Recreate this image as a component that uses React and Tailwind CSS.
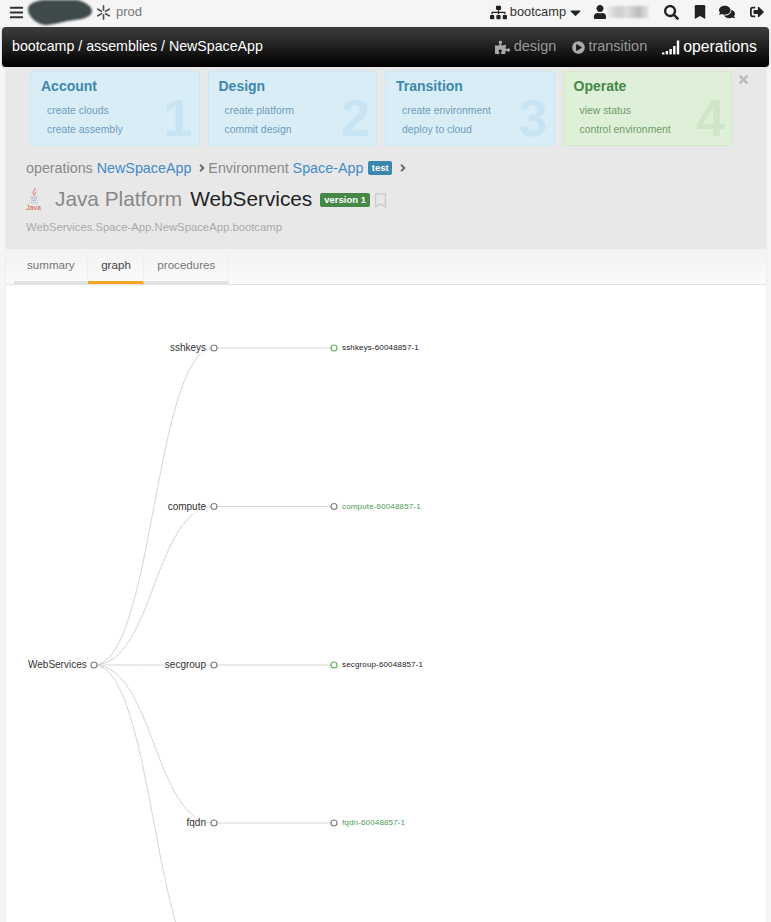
import React from "react";
import {
  FaBars, FaSitemap, FaCaretDown, FaUser, FaSearch, FaBookmark, FaComments,
  FaSignOutAlt, FaPuzzlePiece, FaPlayCircle, FaTimes, FaRegBookmark, FaAngleRight,
} from "react-icons/fa";

const cards = [
  { title: "Account", items: ["create clouds", "create assembly"], n: "1", box: "bg-[#d9edf7] border-[#c9e9f2]", head: "text-[#3f87ae]", link: "text-[#6e9cbd]", num: "text-[#c8e3f2]" },
  { title: "Design", items: ["create platform", "commit design"], n: "2", box: "bg-[#d9edf7] border-[#c9e9f2]", head: "text-[#3f87ae]", link: "text-[#6e9cbd]", num: "text-[#c8e3f2]" },
  { title: "Transition", items: ["create environment", "deploy to cloud"], n: "3", box: "bg-[#d9edf7] border-[#c9e9f2]", head: "text-[#3f87ae]", link: "text-[#6e9cbd]", num: "text-[#c8e3f2]" },
  { title: "Operate", items: ["view status", "control environment"], n: "4", box: "bg-[#dff0d8] border-[#d6e9c6]", head: "text-[#468847]", link: "text-[#6f9a68]", num: "text-[#cfe6c8]" },
];

const ROOT = { x: 88, y: 380 };
const nodes = [
  { name: "sshkeys", y: 63, child: "sshkeys-60048857-1", ok: true },
  { name: "compute", y: 221.5, child: "compute-60048857-1" },
  { name: "secgroup", y: 380, child: "secgroup-60048857-1", ok: true },
  { name: "fqdn", y: 538, child: "fqdn-60048857-1" },
];

function Spark() {
  return (
    <svg width="15" height="15" viewBox="-8 -8 16 16" stroke="#555" strokeWidth="1.8" strokeLinecap="round">
      {[30, 90, 150, 210, 270, 330].map((a) => (
        <line key={a} x1="2.6" y1="0" x2="7" y2="0" transform={`rotate(${a})`} />
      ))}
    </svg>
  );
}

function Signal() {
  return (
    <svg width="18" height="15" viewBox="0 0 18 15" fill="#fff">
      <rect x="0" y="12.4" width="2.4" height="2" />
      <rect x="3.7" y="11" width="2.4" height="3.4" />
      <rect x="7.4" y="9" width="2.4" height="5.4" />
      <rect x="11.1" y="6" width="2.4" height="8.4" />
      <rect x="14.8" y="0.5" width="2.4" height="13.9" />
    </svg>
  );
}

function Blob() {
  return (
    <svg width="66" height="26" viewBox="0 0 66 26" className="blur-[1px] ml-[3px] mt-[-2px]">
      <path d="M1 9C1 4 8 1 16 0L50 0C58 2 65 6 65 11C65 16 58 19 48 20C38 21 30 24 20 25C10 25 1 17 1 9Z" fill="#3f4a4a" />
    </svg>
  );
}

function JavaIcon() {
  return (
    <div className="flex flex-col items-center w-[15px] leading-none">
      <svg width="12" height="17" viewBox="0 0 14 19" fill="none">
        <path d="M8 1c1 2-2 3-2 5s2 2 1 4" stroke="#d9534f" strokeWidth="1.1" />
        <path d="M10 5c-2 1-2 2-1 3" stroke="#d9534f" strokeWidth="0.8" />
        <path d="M3 11c3 1 6 1 8 0M3.5 13c3 .8 5 .8 7 0M4 15c2 .7 4 .7 6 0" stroke="#a9b8c6" strokeWidth="1" />
        <path d="M2 17.5c3 1 8 1 10 0" stroke="#a9b8c6" strokeWidth="0.8" />
      </svg>
      <span className="text-[7px] text-[#d9534f] mt-[0px]">Java</span>
    </div>
  );
}

function Graph() {
  return (
    <div className="relative flex-1 bg-white overflow-hidden">
      <svg className="absolute left-0 top-0" width="761" height="637" fill="none" stroke="#d4d4d4" strokeWidth="1">
        {[...nodes.map((n) => n.y), 696].map((y) => (
          <path key={y} d={`M${ROOT.x} ${ROOT.y} C148 ${ROOT.y} 148 ${y} 208 ${y}`} />
        ))}
        {nodes.map((n) => (
          <line key={n.name} x1="208" y1={n.y} x2="328" y2={n.y} />
        ))}
        <circle cx={ROOT.x} cy={ROOT.y} r="3" fill="#fff" stroke="#808080" strokeWidth="1.2" />
        {nodes.map((n) => (
          <g key={n.name} fill="#fff" strokeWidth="1.2">
            <circle cx="208" cy={n.y} r="3" stroke="#808080" />
            <circle cx="328" cy={n.y} r="3" stroke={n.ok ? "#5cb85c" : "#808080"} />
          </g>
        ))}
      </svg>
      <span className="absolute left-[22px] top-[373px] text-[10px] leading-[14px] text-[#333]">WebServices</span>
      {nodes.map((n) => (
        <React.Fragment key={n.name}>
          <span className="absolute right-[560px] text-[10px] leading-[14px] text-[#333] bg-white/60" style={{ top: n.y - 7 }}>{n.name}</span>
          <span className={`absolute left-[336px] text-[8px] leading-[12px] tracking-[0.15px] ${n.ok ? "text-[#222]" : "text-[#4f9a57]"}`} style={{ top: n.y - 6 }}>{n.child}</span>
        </React.Fragment>
      ))}
    </div>
  );
}

export default function App() {
  return (
    <div className="w-[771px] h-[922px] overflow-hidden flex flex-col bg-[#f5f5f5] font-['Liberation_Sans',Arial,sans-serif]">
      <header className="h-[27px] shrink-0 flex items-center relative text-[#333]">
        <FaBars className="ml-[9px] text-[#333] text-[15px] mt-[-3px]" />
        <Blob />
        <div className="ml-[3px] mt-[-3px]"><Spark /></div>
        <span className="ml-[5px] mt-[-3px] text-[13px] text-[#777]">prod</span>
        <div className="ml-auto flex items-center mt-[-3px] pr-[7px]">
          <FaSitemap className="text-[17px] text-[#222]" />
          <span className="ml-[3px] text-[12.8px] text-[#333]">bootcamp</span>
          <FaCaretDown className="ml-[1px] text-[17px] text-[#222]" />
          <FaUser className="ml-[9px] text-[14px] text-[#222]" />
          <div className="w-[45px] h-[12px] bg-[linear-gradient(90deg,#eee,#ccc_25%,#ddd_45%,#bbb_70%,#ddd_88%,#fff)] blur-[1px]" />
          <FaSearch className="ml-[12px] text-[15px] text-[#222]" />
          <FaBookmark className="ml-[14px] text-[14px] text-[#222]" />
          <FaComments className="ml-[12px] text-[16px] text-[#222]" />
          <FaSignOutAlt className="ml-[15px] text-[14px] text-[#222]" />
        </div>
      </header>

      <nav className="h-[40px] shrink-0 mx-[2px] rounded-[4px] bg-[linear-gradient(#3d3d3d,#000)] flex items-center pl-[10px] pr-[12px] text-white shadow-[0_1px_2px_rgba(0,0,0,0.3)]">
        <span className="text-[14.2px]">bootcamp / assemblies / NewSpaceApp</span>
        <div className="ml-auto flex items-center text-[14.5px]">
          <FaPuzzlePiece className="text-[#aaa] text-[15px] mr-[4px]" />
          <span className="text-[#999]">design</span>
          <FaPlayCircle className="ml-[16px] text-[#aaa] text-[13px] mr-[3px]" />
          <span className="text-[#999]">transition</span>
          <span className="ml-[15px] mr-[3px]"><Signal /></span>
          <span className="text-[15.8px]">operations</span>
        </div>
      </nav>

      <main className="flex-1 min-h-0 ml-[5px] mr-[4px] flex flex-col bg-[#e8e8e8] border-x border-[#eee]">
        <section className="h-[182px] shrink-0 flex flex-col">
          <div className="flex gap-[8px] ml-[24px] mt-[4px] relative">
            {cards.map((c) => (
              <div key={c.title} className={`relative w-[169.5px] h-[75px] border rounded-[3px] overflow-hidden pl-[10px] ${c.box}`}>
                <div className={`mt-[6px] text-[14px] font-bold leading-[16px] ${c.head}`}>{c.title}</div>
                <div className={`ml-[6px] mt-[7px] text-[10.4px] leading-[19px] ${c.link}`}>
                  {c.items.map((t) => <div key={t}>{t}</div>)}
                </div>
                <span className={`absolute right-[6px] top-[19px] text-[52px] leading-[54px] font-bold ${c.num}`}>{c.n}</span>
              </div>
            ))}
            <FaTimes className="text-[#bbb] text-[13px] mt-[2px] ml-[-3px]" />
          </div>
          <div className="ml-[20px] mt-[13px] flex items-center text-[14.3px] leading-[18px] text-[#888]">
            <span>operations</span>
            <span className="ml-[4px] text-[#428bca]">NewSpaceApp</span>
            <FaAngleRight className="ml-[5px] text-[#666] text-[12px]" />
            <span className="ml-[0px]">Environment</span>
            <span className="ml-[4px] text-[#428bca]">Space-App</span>
            <span className="ml-[5px] px-[3.5px] h-[14px] rounded-[2px] bg-[#3a87ad] text-white text-[9.5px] font-bold leading-[14px]">test</span>
            <FaAngleRight className="ml-[5px] text-[#666] text-[12px]" />
          </div>
          <div className="ml-[20px] mt-[6px] flex items-center h-[32px]">
            <JavaIcon />
            <span className="ml-[14px] text-[20.8px] text-[#888]">Java Platform</span>
            <span className="ml-[8px] text-[20.8px] text-[#222]">WebServices</span>
            <span className="ml-[8px] mt-[2px] px-[4px] h-[14px] rounded-[2px] bg-[#468847] text-white text-[9.5px] font-bold leading-[14px]">version 1</span>
            <FaRegBookmark className="ml-[3px] mt-[2px] text-[#ccc] text-[15px]" />
          </div>
          <div className="ml-[20px] mt-[5px] text-[11.3px] leading-[14px] text-[#aaa]">WebServices.Space-App.NewSpaceApp.bootcamp</div>
        </section>

        <div className="h-[36px] shrink-0 bg-[linear-gradient(#f2f2f2,#fbfbfb)] flex pl-[8px] text-[11.6px] border-b border-[#e2e2e2]">
          {["summary", "graph", "procedures"].map((t) => (
            <div
              key={t}
              className={`flex items-center pl-[13px] pr-[12.5px] border-r border-[#efefef] border-b-[3px] ${t === "graph" ? "border-b-[#f5a623] text-[#444]" : "border-b-[#e2e2e2] text-[#777]"}`}
            >
              {t}
            </div>
          ))}
        </div>

        <Graph />
      </main>
    </div>
  );
}
